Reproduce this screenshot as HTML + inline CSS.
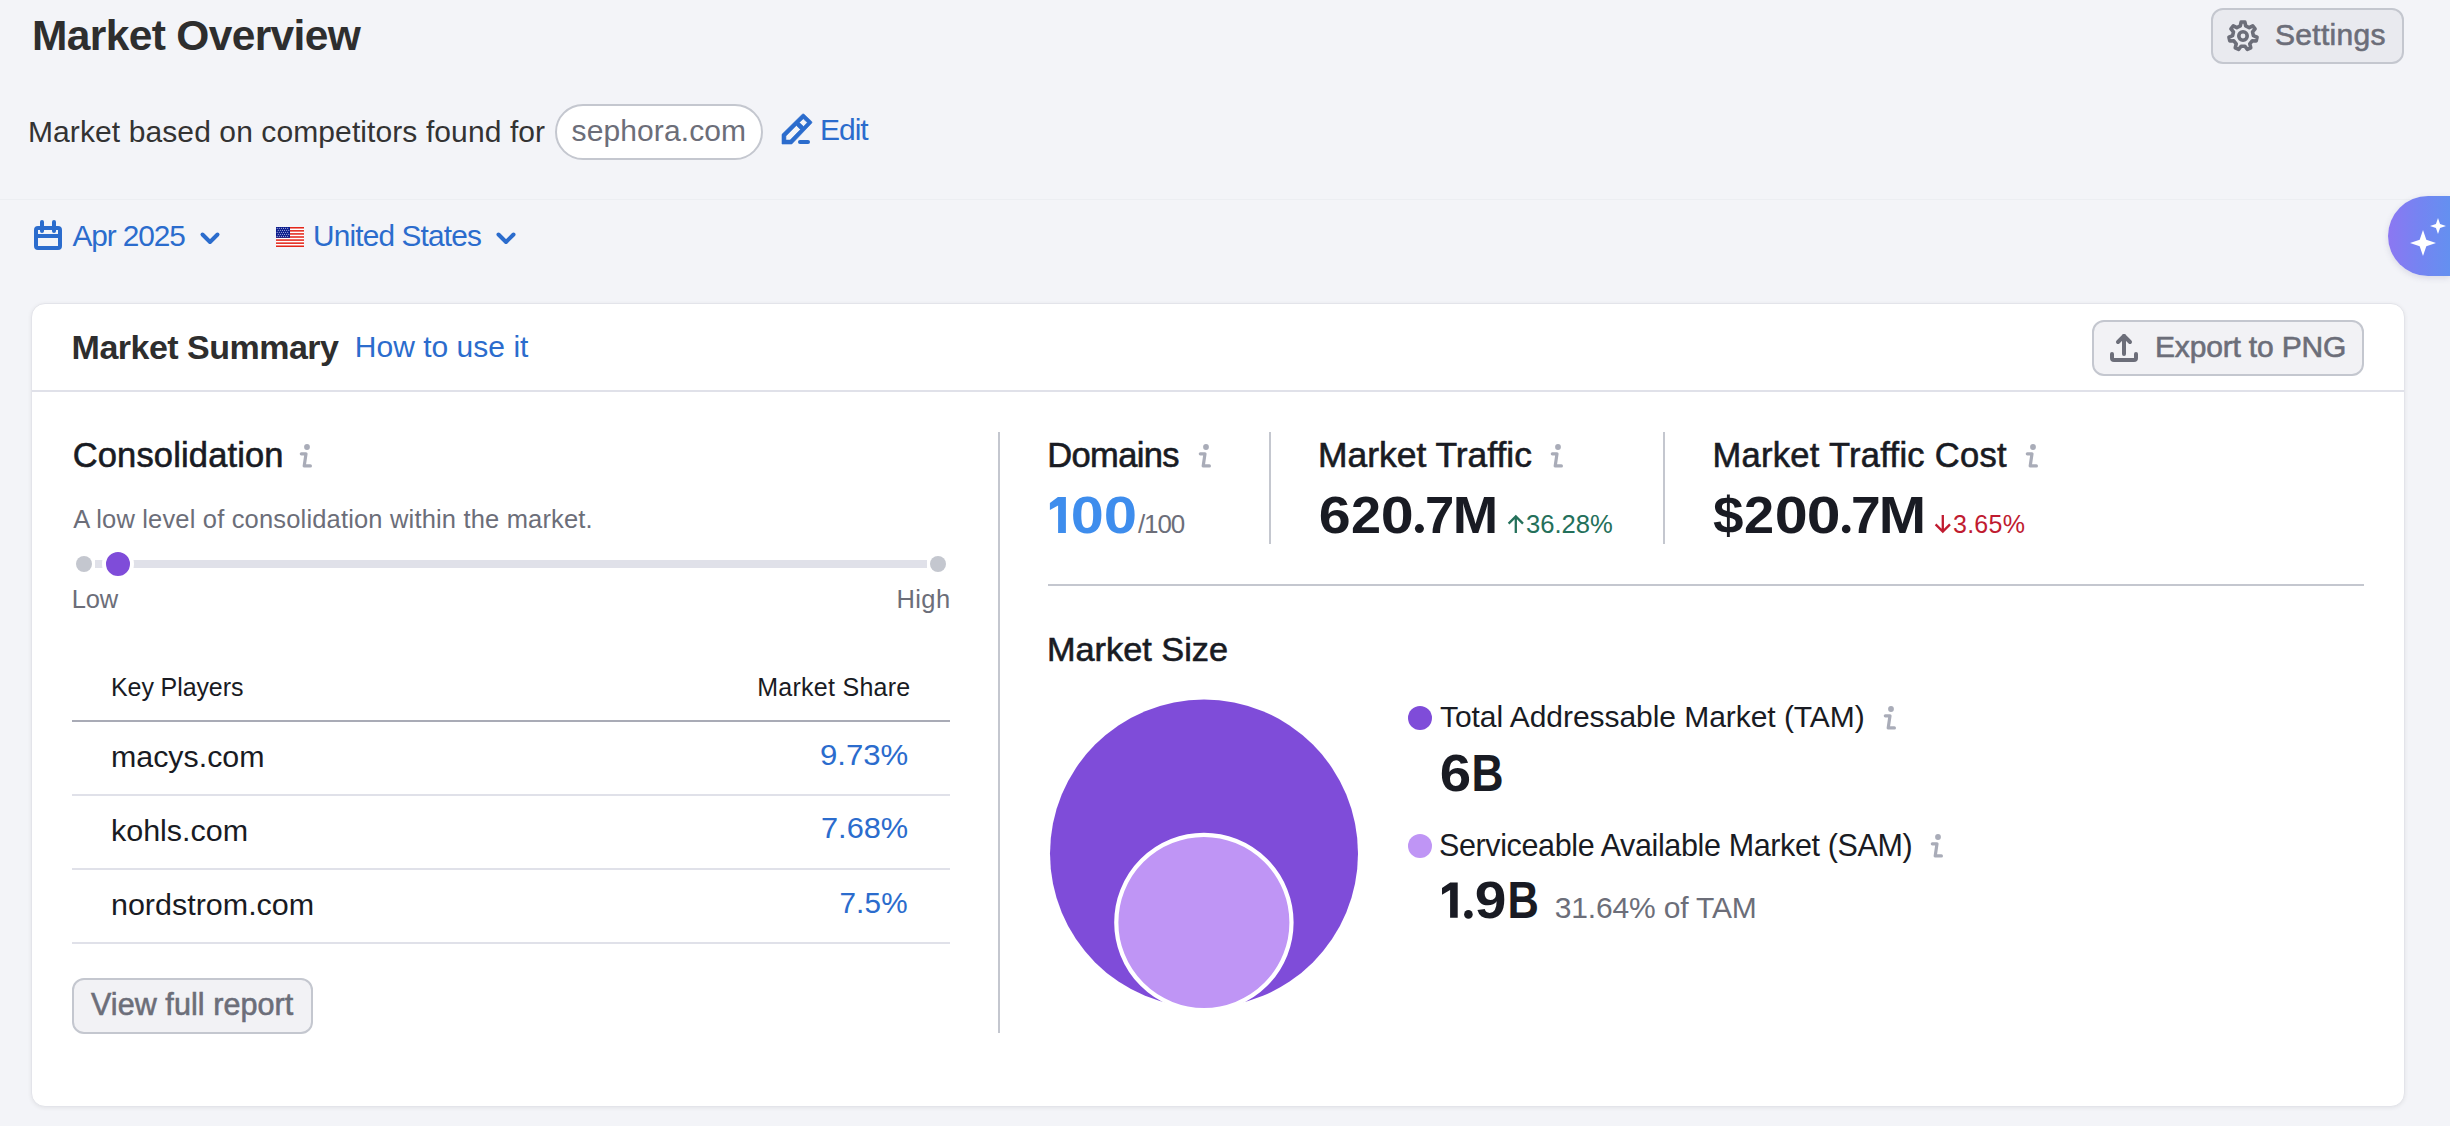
<!DOCTYPE html><html><head><meta charset="utf-8"><style>
html,body{margin:0;padding:0;}
body{width:2450px;height:1126px;overflow:hidden;background:#f3f4f8;position:relative;font-family:"Liberation Sans",sans-serif;}
.t{position:absolute;white-space:pre;font-family:"Liberation Sans",sans-serif;}
.a{position:absolute;box-sizing:border-box;}
svg{position:absolute;overflow:visible;}
</style></head><body>
<div class="a" style="left:0;top:199px;width:2450px;height:1px;background:#eceef2"></div>
<div class="a" style="left:2211px;top:8px;width:193px;height:56px;border:2px solid #c4c7cf;border-radius:12px;background:#e9eaef"></div>
<svg width="2450" height="1126" style="left:0;top:0"><path d="M2240.32 25.95 L2241.11 22.03 L2244.89 22.03 L2245.68 25.95 L2249.19 27.64 L2252.74 25.81 L2255.10 28.77 L2252.53 31.83 L2253.39 35.63 L2257.04 37.26 L2256.20 40.95 L2252.20 40.85 L2249.77 43.89 L2250.77 47.77 L2247.36 49.41 L2244.95 46.22 L2241.05 46.22 L2238.64 49.41 L2235.23 47.77 L2236.23 43.89 L2233.80 40.85 L2229.80 40.95 L2228.96 37.26 L2232.61 35.63 L2233.47 31.83 L2230.90 28.77 L2233.26 25.81 L2236.81 27.64 Z" fill="none" stroke="#6c6e79" stroke-width="3.6" stroke-linejoin="round"/><circle cx="2243" cy="36" r="4.2" fill="none" stroke="#6c6e79" stroke-width="3.6"/></svg>
<div class="a" style="left:555px;top:104px;width:208px;height:56px;border:2px solid #c4c7cf;border-radius:28px;background:#fff"></div>
<svg width="2450" height="1126" style="left:0;top:0"><path fill-rule="evenodd" fill="#2b6ccd" stroke="#2b6ccd" stroke-width="0.6" stroke-linejoin="round" d="M782 144 L782 134.3 L802.3 114.3 Q803.2 113.5 804.1 114.3 L811.6 121.4 Q812.4 122.3 811.6 123.2 L791.8 144 Z M785.9 136.1 L796.4 125.4 L800.4 129.5 L790.1 140.1 L785.9 140.1 Z M799.3 122.5 L803.3 118.8 L807.3 122.5 L803.6 126.5 Z"/>
<line x1="800" y1="142" x2="808" y2="142" stroke="#2b6ccd" stroke-width="4" stroke-linecap="round"/></svg>
<svg width="2450" height="1126" style="left:0;top:0"><g fill="none" stroke="#2b6ccd" stroke-width="4">
<rect x="36" y="228" width="24" height="20" rx="2"/>
<line x1="36" y1="236" x2="60" y2="236"/>
<line x1="42" y1="222" x2="42" y2="231" stroke-linecap="round"/>
<line x1="54" y1="222" x2="54" y2="231" stroke-linecap="round"/>
</g>
<polyline points="202.5,234.5 210,242 217.5,234.5" fill="none" stroke="#2b6ccd" stroke-width="4" stroke-linecap="round" stroke-linejoin="round"/>
<polyline points="498.5,234.5 506,242 513.5,234.5" fill="none" stroke="#2b6ccd" stroke-width="4" stroke-linecap="round" stroke-linejoin="round"/>
</svg>
<svg width="2450" height="1126" style="left:0;top:0"><rect x="276" y="227" width="28" height="20" fill="#fff"/><rect x="276" y="227.000" width="28" height="1.538" fill="#e3261a"/><rect x="276" y="230.077" width="28" height="1.538" fill="#e3261a"/><rect x="276" y="233.154" width="28" height="1.538" fill="#e3261a"/><rect x="276" y="236.231" width="28" height="1.538" fill="#e3261a"/><rect x="276" y="239.308" width="28" height="1.538" fill="#e3261a"/><rect x="276" y="242.385" width="28" height="1.538" fill="#e3261a"/><rect x="276" y="245.462" width="28" height="1.538" fill="#e3261a"/><rect x="276" y="227" width="14" height="10.8" fill="#0a1a8c"/>
<circle cx="277.20" cy="228.20" r="0.55" fill="#d8dcf5"/><circle cx="279.30" cy="228.20" r="0.55" fill="#d8dcf5"/><circle cx="281.40" cy="228.20" r="0.55" fill="#d8dcf5"/><circle cx="283.50" cy="228.20" r="0.55" fill="#d8dcf5"/><circle cx="285.60" cy="228.20" r="0.55" fill="#d8dcf5"/><circle cx="287.70" cy="228.20" r="0.55" fill="#d8dcf5"/><circle cx="278.25" cy="230.20" r="0.55" fill="#d8dcf5"/><circle cx="280.35" cy="230.20" r="0.55" fill="#d8dcf5"/><circle cx="282.45" cy="230.20" r="0.55" fill="#d8dcf5"/><circle cx="284.55" cy="230.20" r="0.55" fill="#d8dcf5"/><circle cx="286.65" cy="230.20" r="0.55" fill="#d8dcf5"/><circle cx="288.75" cy="230.20" r="0.55" fill="#d8dcf5"/><circle cx="277.20" cy="232.20" r="0.55" fill="#d8dcf5"/><circle cx="279.30" cy="232.20" r="0.55" fill="#d8dcf5"/><circle cx="281.40" cy="232.20" r="0.55" fill="#d8dcf5"/><circle cx="283.50" cy="232.20" r="0.55" fill="#d8dcf5"/><circle cx="285.60" cy="232.20" r="0.55" fill="#d8dcf5"/><circle cx="287.70" cy="232.20" r="0.55" fill="#d8dcf5"/><circle cx="278.25" cy="234.20" r="0.55" fill="#d8dcf5"/><circle cx="280.35" cy="234.20" r="0.55" fill="#d8dcf5"/><circle cx="282.45" cy="234.20" r="0.55" fill="#d8dcf5"/><circle cx="284.55" cy="234.20" r="0.55" fill="#d8dcf5"/><circle cx="286.65" cy="234.20" r="0.55" fill="#d8dcf5"/><circle cx="288.75" cy="234.20" r="0.55" fill="#d8dcf5"/><circle cx="277.20" cy="236.20" r="0.55" fill="#d8dcf5"/><circle cx="279.30" cy="236.20" r="0.55" fill="#d8dcf5"/><circle cx="281.40" cy="236.20" r="0.55" fill="#d8dcf5"/><circle cx="283.50" cy="236.20" r="0.55" fill="#d8dcf5"/><circle cx="285.60" cy="236.20" r="0.55" fill="#d8dcf5"/><circle cx="287.70" cy="236.20" r="0.55" fill="#d8dcf5"/></svg>
<div class="a" style="left:2388px;top:196px;width:62px;height:80px;border-radius:40px 0 0 40px;background:linear-gradient(90deg,#8c77f2 0%,#7584f2 50%,#6490f0 100%);box-shadow:0 2px 6px rgba(60,60,120,0.15)"></div>
<svg width="2450" height="1126" style="left:0;top:0"><path d="M2423.00 230.00 L2426.31 239.69 L2436.00 243.00 L2426.31 246.31 L2423.00 256.00 L2419.69 246.31 L2410.00 243.00 L2419.69 239.69 Z" fill="#fff"/><path d="M2438.00 218.00 L2440.04 223.96 L2446.00 226.00 L2440.04 228.04 L2438.00 234.00 L2435.96 228.04 L2430.00 226.00 L2435.96 223.96 Z" fill="#fff"/></svg>
<div class="a" style="left:31px;top:303px;width:2374px;height:804px;border:1px solid #e3e4ea;border-radius:14px;background:#fff;box-shadow:0 1px 4px rgba(0,0,0,0.07)"></div>
<div class="a" style="left:32px;top:390px;width:2372px;height:2px;background:#e0e1e9"></div>
<div class="a" style="left:2092px;top:320px;width:272px;height:56px;border:2px solid #c4c7cf;border-radius:12px;background:#f2f2f5"></div>
<svg width="2450" height="1126" style="left:0;top:0"><g fill="none" stroke="#6c6e79" stroke-width="4" stroke-linecap="round" stroke-linejoin="round">
<path d="M2112 354 L2112 358 Q2112 360 2114 360 L2134 360 Q2136 360 2136 358 L2136 354"/>
<path d="M2124 354 L2124 336"/><path d="M2118 342 L2124 336 L2130 342"/></g></svg>
<div class="a" style="left:998px;top:432px;width:2px;height:601px;background:#c4c7cf"></div>
<div class="a" style="left:1269px;top:432px;width:2px;height:112px;background:#c4c7cf"></div>
<div class="a" style="left:1663px;top:432px;width:2px;height:112px;background:#c4c7cf"></div>
<div class="a" style="left:1048px;top:584px;width:1316px;height:2px;background:#c4c7cf"></div>
<div class="a" style="left:95px;top:560px;width:832px;height:8px;background:#e0e1e9"></div>
<div class="a" style="left:76px;top:556px;width:16px;height:16px;border-radius:50%;background:#c4c7cf"></div>
<div class="a" style="left:930px;top:556px;width:16px;height:16px;border-radius:50%;background:#c4c7cf"></div>
<div class="a" style="left:102px;top:548px;width:32px;height:32px;border-radius:50%;background:#7f4cd9;border:4px solid #fff"></div>
<div class="a" style="left:72px;top:720px;width:878px;height:2px;background:#a9abb6"></div>
<div class="a" style="left:72px;top:794px;width:878px;height:2px;background:#e0e1e9"></div>
<div class="a" style="left:72px;top:868px;width:878px;height:2px;background:#e0e1e9"></div>
<div class="a" style="left:72px;top:942px;width:878px;height:2px;background:#e0e1e9"></div>
<div class="a" style="left:72px;top:978px;width:241px;height:56px;border:2px solid #c4c7cf;border-radius:12px;background:#f2f2f5"></div>
<svg width="2450" height="1126" style="left:0;top:0"><circle cx="307" cy="447" r="2.9" fill="#a9acb8"/><path d="M301.3 453.8 L306 453.8 L304.2 465.9 L310.4 465.9" fill="none" stroke="#a9acb8" stroke-width="3.2" stroke-linecap="round" stroke-linejoin="round"/></svg>
<svg width="2450" height="1126" style="left:0;top:0"><circle cx="1206" cy="447" r="2.9" fill="#a9acb8"/><path d="M1200.3 453.8 L1205 453.8 L1203.2 465.9 L1209.4 465.9" fill="none" stroke="#a9acb8" stroke-width="3.2" stroke-linecap="round" stroke-linejoin="round"/></svg>
<svg width="2450" height="1126" style="left:0;top:0"><circle cx="1558" cy="447" r="2.9" fill="#a9acb8"/><path d="M1552.3 453.8 L1557 453.8 L1555.2 465.9 L1561.4 465.9" fill="none" stroke="#a9acb8" stroke-width="3.2" stroke-linecap="round" stroke-linejoin="round"/></svg>
<svg width="2450" height="1126" style="left:0;top:0"><circle cx="2033" cy="447" r="2.9" fill="#a9acb8"/><path d="M2027.3 453.8 L2032 453.8 L2030.2 465.9 L2036.4 465.9" fill="none" stroke="#a9acb8" stroke-width="3.2" stroke-linecap="round" stroke-linejoin="round"/></svg>
<svg width="2450" height="1126" style="left:0;top:0"><circle cx="1891" cy="709" r="2.9" fill="#a9acb8"/><path d="M1885.3 715.8 L1890 715.8 L1888.2 727.9 L1894.4 727.9" fill="none" stroke="#a9acb8" stroke-width="3.2" stroke-linecap="round" stroke-linejoin="round"/></svg>
<svg width="2450" height="1126" style="left:0;top:0"><circle cx="1938" cy="837" r="2.9" fill="#a9acb8"/><path d="M1932.3 843.8 L1937 843.8 L1935.2 855.9 L1941.4 855.9" fill="none" stroke="#a9acb8" stroke-width="3.2" stroke-linecap="round" stroke-linejoin="round"/></svg>
<svg width="2450" height="1126" style="left:0;top:0"><g fill="none" stroke-width="2.3" stroke-linecap="butt" stroke-linejoin="miter">
<path d="M1515.8 533 L1515.8 517 M1508.6 523.6 L1515.8 516.4 L1523 523.6" stroke="#24705a"/>
<path d="M1942.8 515 L1942.8 531 M1935.6 524.4 L1942.8 531.6 L1950 524.4" stroke="#c01b30"/></g></svg>
<svg width="2450" height="1126" style="left:0;top:0"><circle cx="1204" cy="853.5" r="154" fill="#7f4cd9"/><circle cx="1203.9" cy="922.4" r="87.6" fill="#bf95f5" stroke="#fff" stroke-width="4.2"/><circle cx="1420" cy="718" r="12" fill="#7f4cd9"/><circle cx="1420" cy="846" r="12" fill="#bf95f5"/></svg>
<div class="t" style="left:32.00px;top:14.52px;font-size:42.5px;line-height:42.5px;font-weight:700;letter-spacing:-0.643px;color:#2e2e2e;">Market Overview</div>
<div class="t" style="left:28.00px;top:117.00px;font-size:30px;line-height:30px;font-weight:400;letter-spacing:0.097px;color:#333333;">Market based on competitors found for</div>
<div class="t" style="left:571.60px;top:115.60px;font-size:30px;line-height:30px;font-weight:400;letter-spacing:0.1px;color:#6c6e79;">sephora.com</div>
<div class="t" style="left:820.00px;top:114.60px;font-size:30px;line-height:30px;font-weight:400;letter-spacing:-1.0px;color:#2b6ccd;">Edit</div>
<div class="t" style="left:72.40px;top:220.97px;font-size:29.8px;line-height:29.8px;font-weight:400;letter-spacing:-1.071px;color:#2b6ccd;">Apr 2025</div>
<div class="t" style="left:313.00px;top:220.97px;font-size:29.8px;line-height:29.8px;font-weight:400;letter-spacing:-0.833px;color:#2b6ccd;">United States</div>
<div class="t" style="left:2275.00px;top:19.50px;font-size:30px;line-height:30px;font-weight:400;letter-spacing:0.286px;color:#6c6e79;-webkit-text-stroke:0.6px #6c6e79;">Settings</div>
<div class="t" style="left:71.60px;top:329.61px;font-size:34px;line-height:34px;font-weight:700;letter-spacing:-0.508px;color:#2e2e2e;">Market Summary</div>
<div class="t" style="left:354.80px;top:331.60px;font-size:30px;line-height:30px;font-weight:400;letter-spacing:0.017px;color:#2b6ccd;">How to use it</div>
<div class="t" style="left:2155.00px;top:331.50px;font-size:30px;line-height:30px;font-weight:400;letter-spacing:-0.167px;color:#6c6e79;-webkit-text-stroke:0.6px #6c6e79;">Export to PNG</div>
<div class="t" style="left:72.70px;top:437.79px;font-size:34.5px;line-height:34.5px;font-weight:400;letter-spacing:0.15px;color:#191b23;-webkit-text-stroke:0.6px #191b23;">Consolidation</div>
<div class="t" style="left:73.20px;top:507.41px;font-size:25.5px;line-height:25.5px;font-weight:400;letter-spacing:0.17px;color:#6c6e79;">A low level of consolidation within the market.</div>
<div class="t" style="left:71.70px;top:586.71px;font-size:25.5px;line-height:25.5px;font-weight:400;letter-spacing:-0.15px;color:#6c6e79;">Low</div>
<div class="t" style="left:896.40px;top:587.41px;font-size:25.5px;line-height:25.5px;font-weight:400;letter-spacing:0.433px;color:#6c6e79;">High</div>
<div class="t" style="left:111.00px;top:675.03px;font-size:25px;line-height:25px;font-weight:400;letter-spacing:-0.1px;color:#191b23;">Key Players</div>
<div class="t" style="left:757.20px;top:674.83px;font-size:25px;line-height:25px;font-weight:400;letter-spacing:0.273px;color:#191b23;">Market Share</div>
<div class="t" style="left:111.00px;top:742.02px;font-size:29.5px;line-height:29.5px;font-weight:400;letter-spacing:0px;color:#191b23;transform:scaleX(1.0297);transform-origin:2px 0;">macys.com</div>
<div class="t" style="left:111.00px;top:816.02px;font-size:29.5px;line-height:29.5px;font-weight:400;letter-spacing:0px;color:#191b23;transform:scaleX(1.0333);transform-origin:2px 0;">kohls.com</div>
<div class="t" style="left:111.00px;top:889.82px;font-size:29.5px;line-height:29.5px;font-weight:400;letter-spacing:0px;color:#191b23;transform:scaleX(1.0332);transform-origin:2px 0;">nordstrom.com</div>
<div class="t" style="left:820.00px;top:739.65px;font-size:29.7px;line-height:29.7px;font-weight:400;letter-spacing:0px;color:#2b6ccd;transform:scaleX(1.0488);transform-origin:1px 0;">9.73%</div>
<div class="t" style="left:821.00px;top:813.35px;font-size:29.7px;line-height:29.7px;font-weight:400;letter-spacing:0px;color:#2b6ccd;transform:scaleX(1.0366);transform-origin:1px 0;">7.68%</div>
<div class="t" style="left:839.40px;top:887.75px;font-size:29.7px;line-height:29.7px;font-weight:400;letter-spacing:0.2px;color:#2b6ccd;">7.5%</div>
<div class="t" style="left:91.00px;top:989.48px;font-size:30.5px;line-height:30.5px;font-weight:400;letter-spacing:0.067px;color:#6c6e79;-webkit-text-stroke:0.6px #6c6e79;">View full report</div>
<div class="t" style="left:1047.20px;top:438.29px;font-size:34.5px;line-height:34.5px;font-weight:400;letter-spacing:-0.617px;color:#191b23;-webkit-text-stroke:0.6px #191b23;">Domains</div>
<div class="t" style="left:1138.00px;top:510.89px;font-size:26px;line-height:26px;font-weight:400;letter-spacing:-1.1px;color:#6c6e79;">/100</div>
<div class="t" style="left:1318.40px;top:438.09px;font-size:34.5px;line-height:34.5px;font-weight:400;letter-spacing:0px;color:#191b23;-webkit-text-stroke:0.6px #191b23;transform:scaleX(1.0272);transform-origin:2px 0;">Market Traffic</div>
<div class="t" style="left:1526.00px;top:511.83px;font-size:25px;line-height:25px;font-weight:400;letter-spacing:0px;color:#24705a;transform:scaleX(1.0241);transform-origin:1px 0;">36.28%</div>
<div class="t" style="left:1712.50px;top:438.09px;font-size:34.5px;line-height:34.5px;font-weight:400;letter-spacing:0.289px;color:#191b23;-webkit-text-stroke:0.6px #191b23;">Market Traffic Cost</div>
<div class="t" style="left:1953.00px;top:511.83px;font-size:25px;line-height:25px;font-weight:400;letter-spacing:0.25px;color:#c01b30;">3.65%</div>
<div class="t" style="left:1046.90px;top:632.86px;font-size:33px;line-height:33px;font-weight:400;letter-spacing:0px;color:#191b23;-webkit-text-stroke:0.6px #191b23;transform:scaleX(1.0392);transform-origin:2px 0;">Market Size</div>
<div class="t" style="left:1440.00px;top:701.80px;font-size:30px;line-height:30px;font-weight:400;letter-spacing:-0.052px;color:#191b23;">Total Addressable Market (TAM)</div>
<div class="t" style="left:1439.00px;top:829.88px;font-size:30.5px;line-height:30.5px;font-weight:400;letter-spacing:-0.373px;color:#191b23;">Serviceable Available Market (SAM)</div>
<div class="t" style="left:1554.70px;top:892.60px;font-size:30px;line-height:30px;font-weight:400;letter-spacing:-0.158px;color:#6c6e79;">31.64% of TAM</div>
<div class="t" style="left:1071.40px;top:488.87px;font-size:52px;line-height:52px;font-weight:700;color:#3e8ded;transform:scaleX(1.1440);transform-origin:2px 0">0</div>
<div class="t" style="left:1104.30px;top:488.87px;font-size:52px;line-height:52px;font-weight:700;color:#3e8ded;transform:scaleX(1.1520);transform-origin:2px 0">0</div>
<div class="t" style="left:1318.60px;top:489.07px;font-size:52px;line-height:52px;font-weight:700;color:#191b23;transform:scaleX(1.1040);transform-origin:2px 0">6</div>
<div class="t" style="left:1350.60px;top:489.07px;font-size:52px;line-height:52px;font-weight:700;color:#191b23;transform:scaleX(1.0400);transform-origin:2px 0">2</div>
<div class="t" style="left:1381.10px;top:489.07px;font-size:52px;line-height:52px;font-weight:700;color:#191b23;transform:scaleX(1.1400);transform-origin:2px 0">0</div>
<div class="t" style="left:1424.70px;top:489.07px;font-size:52px;line-height:52px;font-weight:700;color:#191b23;transform:scaleX(1.0120);transform-origin:2px 0">7</div>
<div class="t" style="left:1453.10px;top:489.07px;font-size:52px;line-height:52px;font-weight:700;color:#191b23;transform:scaleX(1.0486);transform-origin:3px 0">M</div>
<div class="t" style="left:1713.40px;top:488.85px;font-size:52.5px;line-height:52.5px;font-weight:700;color:#191b23;transform:scaleX(1.0444);transform-origin:1px 0">$</div>
<div class="t" style="left:1744.30px;top:488.85px;font-size:52.5px;line-height:52.5px;font-weight:700;color:#191b23;transform:scaleX(1.0320);transform-origin:2px 0">2</div>
<div class="t" style="left:1774.80px;top:488.85px;font-size:52.5px;line-height:52.5px;font-weight:700;color:#191b23;transform:scaleX(1.1280);transform-origin:2px 0">0</div>
<div class="t" style="left:1807.20px;top:488.85px;font-size:52.5px;line-height:52.5px;font-weight:700;color:#191b23;transform:scaleX(1.1560);transform-origin:2px 0">0</div>
<div class="t" style="left:1851.30px;top:488.85px;font-size:52.5px;line-height:52.5px;font-weight:700;color:#191b23;transform:scaleX(1.0160);transform-origin:2px 0">7</div>
<div class="t" style="left:1878.90px;top:488.85px;font-size:52.5px;line-height:52.5px;font-weight:700;color:#191b23;transform:scaleX(1.0833);transform-origin:4px 0">M</div>
<div class="t" style="left:1439.70px;top:748.39px;font-size:51.5px;line-height:51.5px;font-weight:700;color:#191b23;transform:scaleX(1.0960);transform-origin:2px 0">6</div>
<div class="t" style="left:1471.20px;top:748.39px;font-size:51.5px;line-height:51.5px;font-weight:700;color:#191b23;transform:scaleX(0.8625);transform-origin:3px 0">B</div>
<div class="t" style="left:1475.10px;top:875.35px;font-size:51.2px;line-height:51.2px;font-weight:700;color:#191b23;transform:scaleX(1.1120);transform-origin:2px 0">9</div>
<div class="t" style="left:1506.60px;top:875.35px;font-size:51.2px;line-height:51.2px;font-weight:700;color:#191b23;transform:scaleX(0.8500);transform-origin:3px 0">B</div>
<svg width="2450" height="1126" style="left:0;top:0"><path d="M1049.9 502.9 L1057.9 497.1 L1065.9 497.1 L1065.9 532.9 L1058.1 532.9 L1058.1 505.5 L1049.9 510 Z" fill="#3e8ded"/><circle cx="1419.40" cy="528.60" r="4.50" fill="#191b23"/><circle cx="1846.20" cy="529.00" r="4.30" fill="#191b23"/><path d="M1442 888.1 L1450.2 882.5 L1457.7 882.5 L1457.7 917.7 L1450.1 917.7 L1450.1 890 L1442 894.8 Z" fill="#191b23"/><circle cx="1468.40" cy="914.40" r="4.30" fill="#191b23"/></svg>
</body></html>
